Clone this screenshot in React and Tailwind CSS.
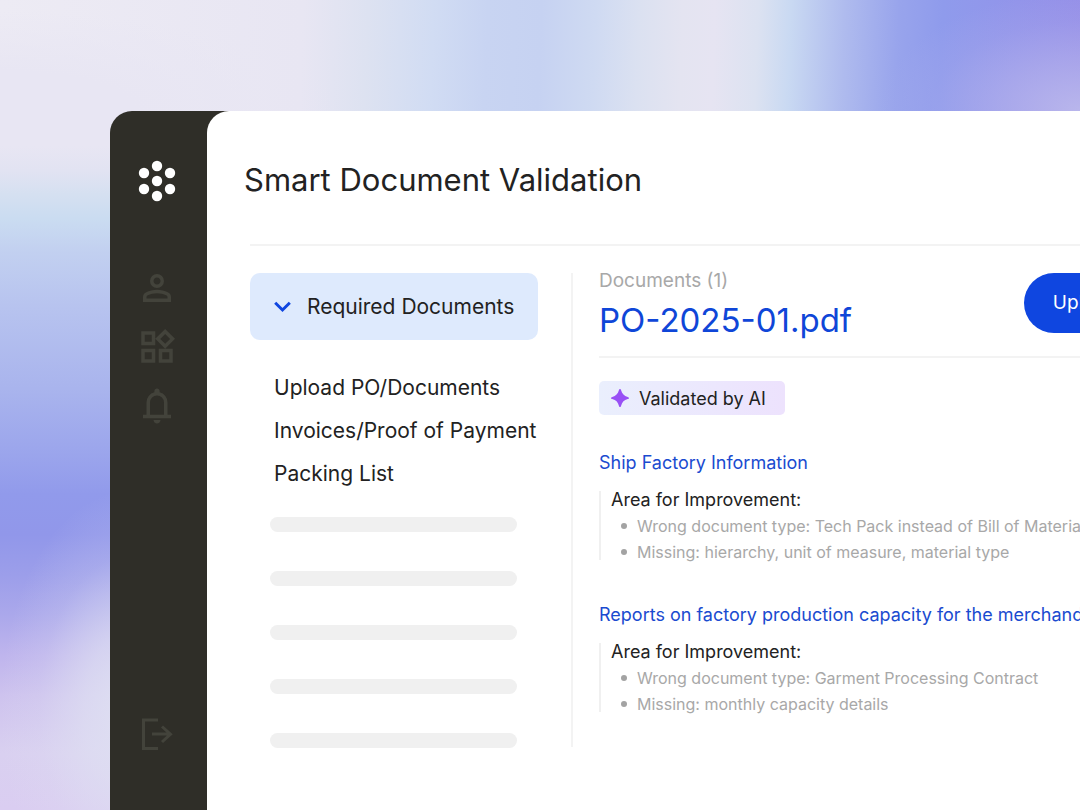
const ICONS = [
  {
    label: "Profile",
    d: "M480-480q-66 0-113-47t-47-113q0-66 47-113t113-47q66 0 113 47t47 113q0 66-47 113t-113 47ZM160-160v-112q0-34 17.5-62.5T224-378q62-31 126-46.5T480-440q66 0 130 15.5T736-378q29 15 46.5 43.5T800-272v112H160Zm80-80h480v-32q0-11-5.5-20T700-306q-54-27-109-40.5T480-360q-56 0-111 13.5T260-306q-9 5-14.5 14t-5.5 20v32Zm240-320q33 0 56.5-23.5T560-640q0-33-23.5-56.5T480-720q-33 0-56.5 23.5T400-640q0 33 23.5 56.5T480-560Z",
  },
  {
    label: "Widgets",
    d: "M666-440 440-666l226-226 226 226-226 226Zm-546-80v-320h320v320H120Zm400 400v-320h320v320H520Zm-400 0v-320h320v320H120Zm80-480h160v-160H200v160Zm467 48 113-113-113-113-113 113 113 113Zm-67 352h160v-160H600v160Zm-400 0h160v-160H200v160Z",
  },
  {
    label: "Notifications",
    d: "M160-200v-80h80v-280q0-83 50-147.5T420-792v-28q0-25 17.5-42.5T480-880t42.5 17.5T540-820v28q80 20 130 84.5T720-560v280h80v80H160Zm320 120q-33 0-56.5-23.5T400-160h160q0 33-23.5 56.5T480-80ZM320-280h320v-280q0-66-47-113t-113-47q-66 0-113 47t-47 113v280Z",
  },
];

const LOGO_DOTS = [
  [19, 6],
  [6, 13],
  [32, 13],
  [19, 21],
  [6, 29],
  [32, 29],
  [19, 36],
];

const DOCUMENT_LINKS = ["Upload PO/Documents", "Invoices/Proof of Payment", "Packing List"];

const REPORTS = [
  {
    title: "Ship Factory Information",
    issues: [
      "Wrong document type: Tech Pack instead of Bill of Materials",
      "Missing: hierarchy, unit of measure, material type",
    ],
  },
  {
    title: "Reports on factory production capacity for the merchandise",
    issues: [
      "Wrong document type: Garment Processing Contract",
      "Missing: monthly capacity details",
    ],
  },
];

function Sidebar() {
  return (
    <nav aria-label="Main" className="flex w-[97px] shrink-0 flex-col items-center pt-[49px] pr-1 pb-[55px] text-[#43433b]">
      <svg viewBox="0 0 38 42" className="h-[42px] w-[38px] fill-white" aria-hidden="true">
        {LOGO_DOTS.map(([cx, cy]) => (
          <circle key={`${cx}-${cy}`} cx={cx} cy={cy} r="5.2" />
        ))}
      </svg>
      <div className="mt-[65px] flex flex-col gap-[17px]">
        {ICONS.map((icon) => (
          <button key={icon.label} type="button" aria-label={icon.label}>
            <svg viewBox="0 -960 960 960" className="block size-[42px] fill-current">
              <path d={icon.d} />
            </svg>
          </button>
        ))}
      </div>
      <button type="button" aria-label="Log out" className="mt-auto">
        <svg viewBox="0 0 42 42" className="block size-[42px]" fill="none" stroke="currentColor" strokeWidth="3">
          <path d="M22 7H7.500V35.500H22M16 21H35M26 13.500L34.500 21.200L26 29" />
        </svg>
      </button>
    </nav>
  );
}

function Checklist() {
  return (
    <aside className="w-[288px] shrink-0">
      <button
        type="button"
        aria-expanded="true"
        className="flex h-[67px] w-full items-center gap-4 rounded-[10px] bg-[#deeafd] pl-6 text-[21px] leading-7"
      >
        <svg viewBox="0 0 17 12" className="h-3 w-[17px]" fill="none" stroke="#0f46e0" strokeWidth="3" aria-hidden="true">
          <path d="M1.200 1.800L8.500 9L15.800 1.800" />
        </svg>
        Required Documents
      </button>
      <ul className="mt-[34px] flex flex-col gap-[15px] pl-6 text-[21px] leading-7 whitespace-nowrap">
        {DOCUMENT_LINKS.map((name) => (
          <li key={name}>
            <a href="#documents" className="block">{name}</a>
          </li>
        ))}
      </ul>
      <div className="mt-[29px] flex flex-col gap-[39px] pr-[21px] pl-5" aria-hidden="true">
        {[0, 1, 2, 3, 4].map((row) => (
          <div key={row} className="h-[15px] rounded-full bg-[#f0f0f0]" />
        ))}
      </div>
    </aside>
  );
}

function Report({ title, issues }) {
  return (
    <section>
      <h3 className="text-[18px] leading-7 text-[#1a4bd0]">{title}</h3>
      <div className="mt-[14px] border-l-2 border-[#f0f0f0] pl-[10px]">
        <p className="text-[18px] leading-[18px]">Area for Improvement:</p>
        <ul className="mt-[9px] flex flex-col gap-[10px] pl-[10px] text-[16px] leading-4 text-[#a8a8a8]">
          {issues.map((issue) => (
            <li key={issue} className="flex items-center gap-[10px]">
              <span className="size-[6px] shrink-0 rounded-full bg-[#a3a3a3]" />
              {issue}
            </li>
          ))}
        </ul>
      </div>
    </section>
  );
}

function Details() {
  return (
    <section id="documents" className="min-w-0 flex-1 whitespace-nowrap">
      <header className="flex items-start justify-between border-b-2 border-[#f3f3f3] pb-[19px]">
        <div>
          <p className="text-[19px] leading-4 text-[#a8a8a8]">Documents (1)</p>
          <h2 className="mt-[15px] text-[33px] leading-[33px] text-[#0f46d8]">PO-2025-01.pdf</h2>
        </div>
        <button type="button" className="h-[60px] w-[122px] rounded-full bg-[#0f46e0] text-[19px] text-white">
          Upload
        </button>
      </header>
      <p className="mt-[23px] flex h-[34px] w-[186px] items-center gap-[10px] rounded-[5px] bg-linear-to-r from-[#eaeffd] to-[#ede2fd] pl-3 text-[18px]">
        <svg viewBox="0 0 18 18" className="size-[18px] fill-[#9850f5]" aria-hidden="true">
          <path d="M9 0C9.600 0 9.900 .6 10.100 1.300C11.200 5 13 6.800 16.700 7.900C17.400 8.100 18 8.400 18 9C18 9.600 17.400 9.900 16.700 10.100C13 11.200 11.200 13 10.100 16.700C9.900 17.400 9.600 18 9 18C8.400 18 8.100 17.400 7.900 16.700C6.800 13 5 11.200 1.300 10.100C.6 9.900 0 9.600 0 9C0 8.400 .6 8.100 1.300 7.900C5 6.800 6.800 5 7.900 1.300C8.100 .6 8.400 0 9 0Z" />
        </svg>
        Validated by AI
      </p>
      <div className="mt-[34px] flex flex-col gap-[41px]">
        {REPORTS.map((report) => (
          <Report key={report.title} {...report} />
        ))}
      </div>
    </section>
  );
}

export default function App() {
  return (
    <div className="flex min-h-screen flex-col overflow-hidden bg-[radial-gradient(ellipse_130px_220px_at_130px_710px,#dfe0f2_0%,#dfe0f2b0_35%,#dfe0f230_70%,#dfe0f200_100%),linear-gradient(180deg,#e8e6f3_0%,#e8e6f3_18%,#e2e3f2_21%,#d5e0f1_24%,#cadcf1_27%,#c2d0f0_31%,#b7c3ef_38%,#a9b4ed_48%,#9ba5ec_56%,#919aeb_61%,#9197ea_66%,#9c9eea_71%,#aba8eb_76%,#bfb5ed_81%,#cec3ee_86%,#d9d0f0_93%,#dacdf1_100%)] font-['Inter','Liberation_Sans',sans-serif] text-[#222222]">
      <div className="h-[111px] shrink-0 bg-[radial-gradient(ellipse_340px_100px_at_0%_100%,#e8e6f3_0%,#e8e6f3_40%,#e8e6f300_100%),radial-gradient(ellipse_200px_120px_at_100%_100%,#b9b6ec_0%,#b9b6ec90_40%,#b9b6ec28_75%,#b9b6ec00_100%),linear-gradient(92deg,#edebf4_0%,#e8e6f3_28%,#dde2f1_34%,#d1dcf3_40%,#c8d4f2_45%,#c6d2f2_50%,#cfdaf2_55%,#dbe1f1_59%,#e4e4f1_63%,#e6e4f2_66%,#dce2f1_70%,#c9d9f2_73%,#afbbee_78%,#98a4ec_83%,#8f9bec_87%,#9294ea_94%,#958fe8_100%)]" />
      <div className="ml-[110px] flex flex-1 rounded-tl-[22px] bg-[#2f2e28]">
        <Sidebar />
        <main className="min-w-0 flex-1 rounded-tl-[22px] bg-white pb-10">
          <div className="-mr-[66px] pl-[43px]">
            <h1 className="-ml-[6px] pt-[49px] text-[31px] leading-10">Smart Document Validation</h1>
            <div className="mt-[44px] h-[2px] bg-[#f3f3f3]" />
            <div className="mt-[27px] flex">
              <Checklist />
              <div className="mr-[26px] ml-[33px] h-[474px] w-[2px] shrink-0 bg-[#f3f3f3]" />
              <Details />
            </div>
          </div>
        </main>
      </div>
    </div>
  );
}
